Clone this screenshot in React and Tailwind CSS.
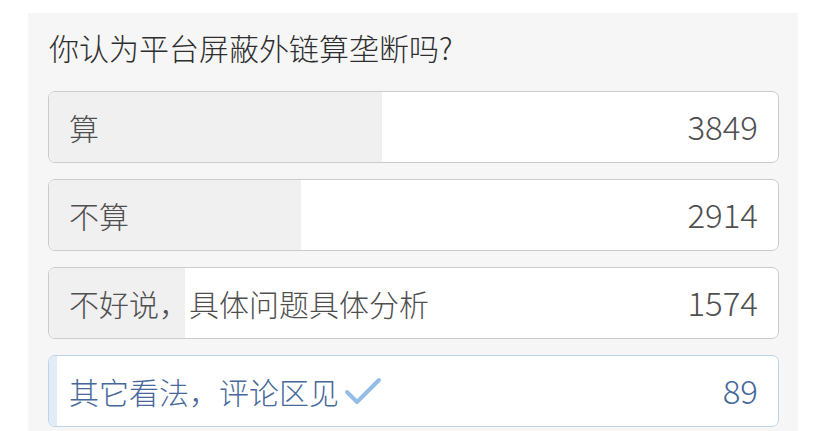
const options = [
  { label: "算", count: 3849 },
  { label: "不算", count: 2914 },
  { label: "不好说，具体问题具体分析", count: 1574 },
  { label: "其它看法，评论区见", count: 89, chosen: true },
];

const total = options.reduce((s, o) => s + o.count, 0);

const Check = () => (
  <svg width="40" height="30" viewBox="0 0 40 30" className="ml-[4px]">
    <polyline
      points="4,16 14,26 36,4"
      fill="none"
      stroke="#94bde6"
      strokeWidth="4"
      strokeLinecap="round"
      strokeLinejoin="round"
    />
  </svg>
);

const Option = ({ label, count, chosen }) => {
  const pct = (count / total) * 100;
  return (
    <div
      className={
        "relative h-[72px] rounded-[7px] border bg-white overflow-hidden " +
        (chosen ? "border-[#bcd4ea]" : "border-[#cbcbcb]")
      }
    >
      <div
        className={"absolute inset-y-0 left-0 " + (chosen ? "bg-[#e1ecf7]" : "bg-[#f0f0f0]")}
        style={{ width: pct + "%" }}
      />
      <div
        className={
          "relative h-full flex items-center justify-between pl-[20px] pr-[20px] text-[30px] font-light " +
          (chosen ? "text-[#46689a]" : "text-[#4f4f4f]")
        }
      >
        <span className="flex items-center">
          {label}
          {chosen && <Check />}
        </span>
        <span className="text-[33px]">{count}</span>
      </div>
    </div>
  );
};

export default function App() {
  return (
    <div
      className="w-[828px] h-[431px] bg-white overflow-hidden"
      style={{ fontFamily: '"Noto Sans CJK SC", "Noto Sans", sans-serif' }}
    >
      <div className="ml-[28px] mt-[13px] w-[770px] h-[418px] bg-[#f6f6f6] pl-[20px] pr-[19px] pt-[14px]">
        <h1 className="text-[30px] leading-[40px] font-light text-[#2e2e2e] pl-px">你认为平台屏蔽外链算垄断吗?</h1>
        <div className="mt-[24px] flex flex-col gap-[16px]">
          {options.map((o) => (
            <Option key={o.label} {...o} />
          ))}
        </div>
      </div>
    </div>
  );
}
